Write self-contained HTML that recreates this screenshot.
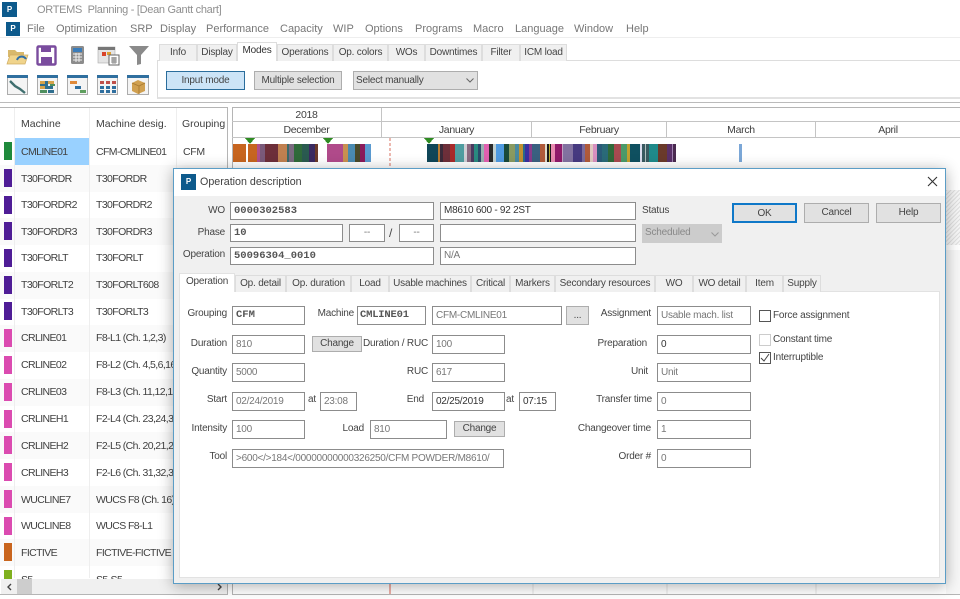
<!DOCTYPE html>
<html><head><meta charset="utf-8"><title>ORTEMS Planning</title>
<style>
html,body{margin:0;padding:0;background:#fff}
#p{position:relative;width:960px;height:599px;overflow:hidden;background:#fff;font:10px "Liberation Sans",sans-serif;letter-spacing:-.2px;color:#444}
#p div,#p span.a{position:absolute;box-sizing:border-box}
.t{white-space:nowrap;line-height:14px;height:14px}
.r{white-space:nowrap;line-height:14px;height:14px;text-align:right}
.m{white-space:nowrap;color:#777;font-size:11px;letter-spacing:0;line-height:14px;height:14px;top:22px}
.b{background:#e1e1e1;border:1px solid #adadad;text-align:center;white-space:nowrap;color:#444}
.f{background:#fff;border:1px solid #8c8c8c;white-space:nowrap;overflow:hidden;padding-left:3px;color:#777;line-height:16px;letter-spacing:-.25px}
.d{color:#333}
.bd{font-family:"Liberation Mono",monospace;font-weight:bold;color:#555;font-size:10.5px;letter-spacing:0}
.tb{background:#f0f0f0;border:1px solid #ddd;border-bottom:0;top:44px;height:17px;text-align:center;line-height:15px;color:#444;white-space:nowrap}
.dt{background:#f0f0f0;border:1px solid #ddd;border-bottom:0;top:275px;height:17px;text-align:center;line-height:15px;color:#444;white-space:nowrap}
.row{left:15px;width:212px;height:27px}
.c{left:4px;width:8px;height:18px}
.n{left:21px;white-space:nowrap;line-height:14px;height:14px;color:#404040;font-size:10.5px;letter-spacing:-.6px}
.g{left:96px;white-space:nowrap;line-height:14px;height:14px;color:#404040;font-size:10.5px;letter-spacing:-.6px}
.h{font-size:10.5px;letter-spacing:-.3px;color:#404040}
.ck{width:12px;height:12px;border:1px solid #555;background:#fff}
svg{position:absolute;overflow:visible}
</style></head><body><div id="p">

<!-- title + menu -->
<div style="left:2px;top:2px;width:15px;height:15px;background:#0d5a8c;color:#fff;font:bold 8px/15px 'Liberation Sans';text-align:center">P</div>
<div class="t" style="left:37px;top:3px;color:#8f8f8f;font-size:11px;letter-spacing:-.3px">ORTEMS&nbsp; Planning - [Dean Gantt chart]</div>
<div style="left:6px;top:22px;width:14px;height:14px;background:#0d5a8c;color:#fff;font:bold 8px/14px 'Liberation Sans';text-align:center">P</div>
<div class="m" style="left:27px">File</div>
<div class="m" style="left:56px">Optimization</div>
<div class="m" style="left:130px">SRP</div>
<div class="m" style="left:160px">Display</div>
<div class="m" style="left:206px">Performance</div>
<div class="m" style="left:280px">Capacity</div>
<div class="m" style="left:333px">WIP</div>
<div class="m" style="left:365px">Options</div>
<div class="m" style="left:415px">Programs</div>
<div class="m" style="left:473px">Macro</div>
<div class="m" style="left:515px">Language</div>
<div class="m" style="left:574px">Window</div>
<div class="m" style="left:626px">Help</div>
<div style="left:0;top:37px;width:960px;height:1px;background:#eee"></div>

<!-- toolbar icons -->
<svg style="left:0;top:40px" width="160" height="60" viewBox="0 0 160 60">
 <path d="M8 10h7l2 2h7v5H8z" fill="#d9b96c"/><path d="M7 24l3-9h18l-3 9z" fill="#f0d48c" stroke="#d0ac60" stroke-width=".7"/><path d="M17 20a5 5 0 0 1 9-1" fill="none" stroke="#2f6fa8" stroke-width="2"/>
 <rect x="37.500" y="6.500" width="18" height="18" rx="1" fill="#fff" stroke="#7a4c9e" stroke-width="2.400"/><rect x="41" y="6" width="10" height="6" fill="#7a4c9e"/><rect x="41" y="17" width="11" height="7" fill="#7a4c9e"/>
 <rect x="71" y="6" width="13" height="18" rx="1.500" fill="#8c8c8c"/><rect x="73" y="8" width="9" height="4" fill="#3a7cba"/><path d="M73 14h9M73 17h9M73 20h9M76 13v9M79 13v9" stroke="#eee" stroke-width="1"/>
 <rect x="98" y="7" width="17" height="16" fill="#e4e4e4" stroke="#aaa" stroke-width=".6"/><rect x="98" y="7" width="17" height="3" fill="#777"/><rect x="102" y="12" width="4" height="4" fill="#d8442a"/><rect x="107" y="12" width="4" height="3" fill="#e0a030"/><rect x="109" y="15" width="10" height="10" fill="#fff" stroke="#666"/><path d="M111 18h6M111 20h6M111 22h6M113 17v7M115 17v7" stroke="#666" stroke-width=".7"/>
 <path d="M129 6h20l-8 9v9l-4 1V15z" fill="#8a8a8a"/>
 <g stroke="#999" stroke-width=".8"><rect x="7.500" y="35.500" width="20" height="19" fill="#f4f4f4"/><rect x="37.500" y="35.500" width="20" height="19" fill="#f4f4f4"/><rect x="67.500" y="35.500" width="20" height="19" fill="#f4f4f4"/><rect x="97.500" y="35.500" width="20" height="19" fill="#f4f4f4"/><rect x="127.500" y="35.500" width="21" height="19" fill="#f4f4f4"/></g>
 <path d="M7 35h21v3H7zM37 35h21v3H37zM67 35h21v3H67zM97 35h21v3H97zM127 35h22v3h-22z" fill="#2f6f9f"/>
 <path d="M10 41l5 5 5 3 5 4" fill="none" stroke="#3f6f6f" stroke-width="2.400"/>
 <path d="M40 41h5v3h-5zM48 41h6v3h-6zM40 46h5v3h-5z" fill="#d6a24a"/><path d="M45 41h3v3h-3zM40 44h8v2h-8zM45 46h8v3h-8zM48 50h6v3h-6z" fill="#2f6f8f"/><path d="M40 50h7v3h-7zM50 44h5v2h-5z" fill="#4f8f5f"/>
 <rect x="70" y="41" width="7" height="3" fill="#e08a3a"/><rect x="75" y="46" width="6" height="3" fill="#2f6f9f"/><rect x="80" y="50" width="6" height="3" fill="#5f9f5f"/>
 <path d="M100 41h4v3h-4zM106 41h4v3h-4zM112 41h4v3h-4z" fill="#c0504a"/><path d="M100 46h4v3h-4zM106 46h4v3h-4zM112 46h4v3h-4zM100 50h4v3h-4zM106 50h4v3h-4zM112 50h4v3h-4z" fill="#2f6f9f"/>
 <path d="M132 43l6-3 7 3v8l-7 3-6-3z" fill="#d0a050"/><path d="M132 43l7 3 6-3M139 46v8" fill="none" stroke="#a87a30" stroke-width=".9"/>
</svg>

<!-- ribbon tabs -->
<div style="left:157px;top:60px;width:803px;height:39px;border-left:1px solid #ddd;border-top:1px solid #ddd;border-bottom:2px solid #e2e2e2;background:#fff"></div>
<div class="tb" style="left:159px;width:38px">Info</div>
<div class="tb" style="left:197px;width:40px">Display</div>
<div style="left:237px;top:42px;width:40px;height:19px;background:#fff;border:1px solid #ddd;border-bottom:0;text-align:center;line-height:16px;color:#333">Modes</div>
<div class="tb" style="left:277px;width:56px">Operations</div>
<div class="tb" style="left:333px;width:55px">Op. colors</div>
<div class="tb" style="left:388px;width:37px">WOs</div>
<div class="tb" style="left:425px;width:57px">Downtimes</div>
<div class="tb" style="left:482px;width:38px">Filter</div>
<div class="tb" style="left:520px;width:47px">ICM load</div>
<div class="b" style="left:166px;top:71px;width:79px;height:19px;background:#cce4f7;border-color:#2a6d9c;line-height:17px">Input mode</div>
<div class="b" style="left:254px;top:71px;width:88px;height:19px;line-height:17px">Multiple selection</div>
<div class="b" style="left:353px;top:71px;width:125px;height:19px;line-height:17px;text-align:left;padding-left:2px">Select manually</div>
<svg style="left:466px;top:78px" width="8" height="5"><path d="M.5.5L4 4 7.5.5" fill="none" stroke="#666"/></svg>
<div style="left:0;top:102px;width:960px;height:1px;background:#bbb"></div>

<!-- table -->
<div style="left:0;top:107px;width:228px;height:488px;border:1px solid #b5b5b5;border-left:0;background:#fff"></div>
<div style="left:232px;top:107px;width:728px;height:488px;border:1px solid #b5b5b5;border-right:0;background:#fff"></div>
<div class="row" style="top:138px;width:75px;background:#99d1ff"></div>
<div class="row" style="top:165px;left:0;width:227px;background:#fafafa"></div>
<div class="row" style="top:218px;left:0;width:227px;background:#fafafa"></div>
<div class="row" style="top:272px;left:0;width:227px;background:#fafafa"></div>
<div class="row" style="top:325px;left:0;width:227px;background:#fafafa"></div>
<div class="row" style="top:379px;left:0;width:227px;background:#fafafa"></div>
<div class="row" style="top:432px;left:0;width:227px;background:#fafafa"></div>
<div class="row" style="top:486px;left:0;width:227px;background:#fafafa"></div>
<div class="row" style="top:539px;left:0;width:227px;background:#fafafa"></div>
<div style="left:14px;top:108px;width:1px;height:470px;background:#eee"></div>
<div style="left:89px;top:108px;width:1px;height:470px;background:#eee"></div>
<div style="left:176px;top:108px;width:1px;height:470px;background:#eee"></div>
<div class="n" style="top:117px;letter-spacing:0">Machine</div>
<div class="g" style="top:117px;letter-spacing:0">Machine desig.</div>
<div class="t h" style="left:182px;top:117px;letter-spacing:0">Grouping</div>
<div class="c" style="top:142px;background:#1f8a3c"></div><div class="n" style="top:145px">CMLINE01</div><div class="g" style="top:145px">CFM-CMLINE01</div><div class="t h" style="left:183px;top:145px">CFM</div>
<div class="c" style="top:169px;background:#4f1d96"></div><div class="n" style="top:172px">T30FORDR</div><div class="g" style="top:172px">T30FORDR</div>
<div class="c" style="top:196px;background:#4f1d96"></div><div class="n" style="top:198px">T30FORDR2</div><div class="g" style="top:198px">T30FORDR2</div>
<div class="c" style="top:222px;background:#4f1d96"></div><div class="n" style="top:225px">T30FORDR3</div><div class="g" style="top:225px">T30FORDR3</div>
<div class="c" style="top:249px;background:#4f1d96"></div><div class="n" style="top:251px">T30FORLT</div><div class="g" style="top:251px">T30FORLT</div>
<div class="c" style="top:276px;background:#4f1d96"></div><div class="n" style="top:278px">T30FORLT2</div><div class="g" style="top:278px">T30FORLT608</div>
<div class="c" style="top:302px;background:#4f1d96"></div><div class="n" style="top:305px">T30FORLT3</div><div class="g" style="top:305px">T30FORLT3</div>
<div class="c" style="top:329px;background:#db4bb0"></div><div class="n" style="top:331px">CRLINE01</div><div class="g" style="top:331px">F8-L1 (Ch. 1,2,3)</div>
<div class="c" style="top:356px;background:#db4bb0"></div><div class="n" style="top:358px">CRLINE02</div><div class="g" style="top:358px">F8-L2 (Ch. 4,5,6,16)</div>
<div class="c" style="top:383px;background:#db4bb0"></div><div class="n" style="top:385px">CRLINE03</div><div class="g" style="top:385px">F8-L3 (Ch. 11,12,13)</div>
<div class="c" style="top:410px;background:#db4bb0"></div><div class="n" style="top:412px">CRLINEH1</div><div class="g" style="top:412px">F2-L4 (Ch. 23,24,30)</div>
<div class="c" style="top:436px;background:#db4bb0"></div><div class="n" style="top:439px">CRLINEH2</div><div class="g" style="top:439px">F2-L5 (Ch. 20,21,22)</div>
<div class="c" style="top:463px;background:#db4bb0"></div><div class="n" style="top:466px">CRLINEH3</div><div class="g" style="top:466px">F2-L6 (Ch. 31,32,33)</div>
<div class="c" style="top:490px;background:#db4bb0"></div><div class="n" style="top:493px">WUCLINE7</div><div class="g" style="top:493px">WUCS F8 (Ch. 16)</div>
<div class="c" style="top:517px;background:#db4bb0"></div><div class="n" style="top:519px">WUCLINE8</div><div class="g" style="top:519px">WUCS F8-L1</div>
<div class="c" style="top:543px;background:#c9651e"></div><div class="n" style="top:546px">FICTIVE</div><div class="g" style="top:546px">FICTIVE-FICTIVE</div>
<div class="c" style="top:570px;height:9px;background:#7fb01e"></div><div class="n" style="top:573px;height:6px;overflow:hidden">S5</div><div class="g" style="top:573px;height:6px;overflow:hidden">S5-S5</div>
<div style="left:1px;top:579px;width:226px;height:15px;background:#f0f0f0"></div>
<div style="left:17px;top:579px;width:15px;height:15px;background:#cdcdcd"></div>
<svg style="left:6px;top:583px" width="8" height="8"><path d="M5 1L2 4l3 3" fill="none" stroke="#444" stroke-width="1.400"/></svg>
<svg style="left:215px;top:583px" width="8" height="8"><path d="M3 1l3 3-3 3" fill="none" stroke="#444" stroke-width="1.400"/></svg>

<!-- gantt header -->
<div style="left:232px;top:121px;width:728px;height:1px;background:#c4c4c4"></div>
<div style="left:232px;top:137px;width:728px;height:1px;background:#c4c4c4"></div>
<div style="left:381px;top:108px;width:1px;height:30px;background:#c4c4c4"></div>
<div style="left:531px;top:122px;width:1px;height:15px;background:#c4c4c4"></div>
<div style="left:666px;top:122px;width:1px;height:15px;background:#c4c4c4"></div>
<div style="left:815px;top:122px;width:1px;height:15px;background:#c4c4c4"></div>
<div class="t h" style="left:232px;width:149px;top:108px;text-align:center">2018</div>
<div class="t h" style="left:232px;width:149px;top:123px;text-align:center">December</div>
<div class="t h" style="left:382px;width:149px;top:123px;text-align:center">January</div>
<div class="t h" style="left:532px;width:134px;top:123px;text-align:center">February</div>
<div class="t h" style="left:667px;width:148px;top:123px;text-align:center">March</div>
<div class="t h" style="left:816px;width:144px;top:123px;text-align:center">April</div>

<!-- gantt bars -->
<svg style="left:0;top:0" width="960" height="599" viewBox="0 0 960 599" shape-rendering="crispEdges">
<g>
<rect x="233" y="144" width="13" height="18" fill="#c7651f"/><rect x="248" y="144" width="9" height="18" fill="#c7651f"/><rect x="257" y="144" width="3" height="18" fill="#b0508a"/><rect x="260" y="144" width="5" height="18" fill="#7a5a7a"/><rect x="265" y="144" width="13" height="18" fill="#6d2f3a"/><rect x="278" y="144" width="9" height="18" fill="#c08050"/><rect x="287" y="144" width="2" height="18" fill="#3a6a6a"/><rect x="289" y="144" width="5" height="18" fill="#7a6a80"/><rect x="294" y="144" width="8" height="18" fill="#2f6a3a"/><rect x="302" y="144" width="7" height="18" fill="#2a5a50"/><rect x="309" y="144" width="6" height="18" fill="#3a2a60"/><rect x="315" y="144" width="3" height="18" fill="#6a3a2a"/>
<rect x="327" y="144" width="16" height="18" fill="#b04a8a"/><rect x="343" y="144" width="5" height="18" fill="#c89050"/><rect x="348" y="144" width="7" height="18" fill="#4a8ab0"/><rect x="355" y="144" width="5" height="18" fill="#4a4a2a"/><rect x="360" y="144" width="5" height="18" fill="#8a1a5a"/><rect x="365" y="144" width="6" height="18" fill="#5a9ad0"/>
<rect x="427" y="144" width="11" height="18" fill="#0f4658"/><rect x="438" y="144" width="2" height="18" fill="#b87a30"/><rect x="440" y="144" width="3" height="18" fill="#3a2a3a"/><rect x="443" y="144" width="7" height="18" fill="#6d2f3a"/><rect x="450" y="144" width="5" height="18" fill="#a82a2a"/><rect x="455" y="144" width="9" height="18" fill="#4f9da0"/><rect x="464" y="144" width="3" height="18" fill="#cfcfd4"/><rect x="467" y="144" width="4" height="18" fill="#8a6a80"/><rect x="471" y="144" width="3" height="18" fill="#4a3a60"/><rect x="474" y="144" width="4" height="18" fill="#2a8a80"/><rect x="478" y="144" width="3" height="18" fill="#2a4a6a"/><rect x="481" y="144" width="3" height="18" fill="#9ab0b0"/><rect x="484" y="144" width="5" height="18" fill="#e060b0"/><rect x="489" y="144" width="4" height="18" fill="#2a2a2a"/><rect x="493" y="144" width="3" height="18" fill="#c0d0d0"/><rect x="496" y="144" width="8" height="18" fill="#4f9ae0"/><rect x="504" y="144" width="5" height="18" fill="#1a4a3a"/><rect x="509" y="144" width="6" height="18" fill="#8a9a60"/><rect x="515" y="144" width="4" height="18" fill="#4a8aa0"/><rect x="519" y="144" width="4" height="18" fill="#c09030"/><rect x="523" y="144" width="2" height="18" fill="#2a6a8a"/><rect x="525" y="144" width="4" height="18" fill="#3a30a0"/><rect x="529" y="144" width="3" height="18" fill="#8a3a8a"/><rect x="532" y="144" width="8" height="18" fill="#3a6080"/><rect x="540" y="144" width="5" height="18" fill="#b05a3a"/><rect x="545" y="144" width="2" height="18" fill="#e0d8c8"/><rect x="547" y="144" width="2" height="18" fill="#1a1a1a"/><rect x="549" y="144" width="1" height="18" fill="#c0b030"/><rect x="550" y="144" width="1" height="18" fill="#1a1a1a"/><rect x="551" y="144" width="4" height="18" fill="#e88ab0"/><rect x="555" y="144" width="7" height="18" fill="#8f1a6a"/><rect x="562" y="144" width="1" height="18" fill="#c0a0c0"/><rect x="563" y="144" width="10" height="18" fill="#8272a0"/><rect x="573" y="144" width="9" height="18" fill="#463a80"/><rect x="582" y="144" width="3" height="18" fill="#7a6a9a"/><rect x="585" y="144" width="5" height="18" fill="#b05a3a"/><rect x="590" y="144" width="3" height="18" fill="#e0c8c0"/><rect x="593" y="144" width="4" height="18" fill="#d890c0"/><rect x="597" y="144" width="5" height="18" fill="#2a5a78"/><rect x="602" y="144" width="6" height="18" fill="#2a6a78"/><rect x="608" y="144" width="6" height="18" fill="#2f6a3a"/><rect x="614" y="144" width="7" height="18" fill="#a84a50"/><rect x="621" y="144" width="6" height="18" fill="#4a9a6a"/><rect x="627" y="144" width="3" height="18" fill="#c0a030"/><rect x="630" y="144" width="10" height="18" fill="#0f5060"/><rect x="640" y="144" width="2" height="18" fill="#dde"/><rect x="642" y="144" width="3" height="18" fill="#3a5a60"/><rect x="645" y="144" width="1" height="18" fill="#b0c0c0"/><rect x="646" y="144" width="3" height="18" fill="#3a5a60"/><rect x="649" y="144" width="9" height="18" fill="#1f8a8a"/><rect x="658" y="144" width="9" height="18" fill="#6a3a2a"/><rect x="667" y="144" width="5" height="18" fill="#5a3068"/><rect x="672" y="144" width="1" height="18" fill="#a080b0"/><rect x="673" y="144" width="3" height="18" fill="#4a2a50"/>
<rect x="739" y="144" width="3" height="18" fill="#7ba7d7"/>
</g>
<path d="M245 138h10l-5 6zM323 138h10l-5 6zM424 138h10l-5 6z" fill="#2e8b22"/>
<path d="M390 138v30" stroke="#d9705f" stroke-dasharray="3 2"/>
<path d="M390 584v10" stroke="#d9604f"/>
<path d="M533 584v10M667 584v10M816 584v10" stroke="#e4e4e4"/>
</svg>
<div style="left:946px;top:190px;width:14px;height:55px;background:repeating-linear-gradient(135deg,#e0e0e0 0 1px,#f6f6f6 1px 3px)"></div>
<div style="left:946px;top:250px;width:14px;height:344px;background:#f7f7f7"></div>

<!-- dialog -->
<div style="left:173px;top:168px;width:773px;height:416px;background:#f0f0f0;border:1px solid #5b9dc6;box-shadow:0 2px 14px rgba(0,0,0,.32)"></div>
<div style="left:174px;top:169px;width:771px;height:27px;background:#fff"></div>
<div style="left:181px;top:174px;width:15px;height:16px;background:#0d5a8c;color:#fff;font:bold 8px/16px 'Liberation Sans';text-align:center">P</div>
<div class="t" style="left:200px;top:175px;font-size:10.7px;letter-spacing:0;color:#404040">Operation description</div>
<svg style="left:927px;top:176px" width="11" height="11"><path d="M1 1l9 9M10 1l-9 9" stroke="#333" stroke-width="1.100"/></svg>

<div class="r" style="left:180px;width:45px;top:204px">WO</div>
<div class="f bd" style="left:230px;top:202px;width:204px;height:18px">0000302583</div>
<div class="f d" style="left:440px;top:202px;width:196px;height:18px">M8610 600 - 92 2ST</div>
<div class="t" style="left:642px;top:204px">Status</div>
<div class="r" style="left:180px;width:45px;top:226px">Phase</div>
<div class="f bd" style="left:230px;top:224px;width:113px;height:18px">10</div>
<div class="f" style="left:349px;top:224px;width:36px;height:18px;text-align:center;padding:0">--</div>
<div class="t" style="left:389px;top:226px;font-size:12px">/</div>
<div class="f" style="left:399px;top:224px;width:35px;height:18px;text-align:center;padding:0">--</div>
<div class="f" style="left:440px;top:224px;width:196px;height:18px"></div>
<div style="left:642px;top:224px;width:80px;height:19px;background:#ccc;color:#888;line-height:18px;padding-left:3px">Scheduled</div>
<svg style="left:711px;top:232px" width="8" height="5"><path d="M.5.5L4 4 7.5.5" fill="none" stroke="#999"/></svg>
<div class="r" style="left:175px;width:50px;top:248px">Operation</div>
<div class="f bd" style="left:230px;top:247px;width:204px;height:18px">50096304_0010</div>
<div class="f" style="left:440px;top:247px;width:196px;height:18px">N/A</div>
<div class="b" style="left:732px;top:203px;width:65px;height:20px;border:2px solid #0f78c8;line-height:17px">OK</div>
<div class="b" style="left:804px;top:203px;width:65px;height:20px;line-height:18px">Cancel</div>
<div class="b" style="left:876px;top:203px;width:65px;height:20px;line-height:18px">Help</div>

<!-- dialog tabs -->
<div style="left:179px;top:291px;width:761px;height:287px;background:#fff;border:1px solid #e2e2e2"></div>
<div style="left:179px;top:273px;width:56px;height:19px;background:#fff;border:1px solid #e2e2e2;border-bottom:0;text-align:center;line-height:16px">Operation</div>
<div class="dt" style="left:235px;width:51px">Op. detail</div>
<div class="dt" style="left:286px;width:65px">Op. duration</div>
<div class="dt" style="left:351px;width:38px">Load</div>
<div class="dt" style="left:389px;width:82px">Usable machines</div>
<div class="dt" style="left:471px;width:39px">Critical</div>
<div class="dt" style="left:510px;width:45px">Markers</div>
<div class="dt" style="left:555px;width:100px">Secondary resources</div>
<div class="dt" style="left:655px;width:38px">WO</div>
<div class="dt" style="left:693px;width:53px">WO detail</div>
<div class="dt" style="left:746px;width:37px">Item</div>
<div class="dt" style="left:783px;width:38px">Supply</div>

<!-- left fields -->
<div class="r" style="left:170px;width:57px;top:307px">Grouping</div>
<div class="f bd" style="left:232px;top:306px;width:73px;height:19px;line-height:17px">CFM</div>
<div class="r" style="left:300px;width:54px;top:307px">Machine</div>
<div class="f bd" style="left:357px;top:306px;width:69px;height:19px;line-height:17px;padding-left:2px;letter-spacing:-.2px">CMLINE01</div>
<div class="f" style="left:432px;top:306px;width:130px;height:19px;line-height:17px">CFM-CMLINE01</div>
<div class="b" style="left:566px;top:306px;width:23px;height:19px;line-height:17px">...</div>
<div class="r" style="left:170px;width:57px;top:337px">Duration</div>
<div class="f" style="left:232px;top:335px;width:73px;height:19px;line-height:17px">810</div>
<div class="b" style="left:312px;top:336px;width:50px;height:16px;line-height:14px">Change</div>
<div class="r" style="left:350px;width:78px;top:337px">Duration / RUC</div>
<div class="f" style="left:432px;top:335px;width:73px;height:19px;line-height:17px">100</div>
<div class="r" style="left:170px;width:57px;top:365px">Quantity</div>
<div class="f" style="left:232px;top:363px;width:73px;height:19px;line-height:17px">5000</div>
<div class="r" style="left:390px;width:38px;top:365px">RUC</div>
<div class="f" style="left:432px;top:363px;width:73px;height:19px;line-height:17px">617</div>
<div class="r" style="left:170px;width:57px;top:393px">Start</div>
<div class="f" style="left:232px;top:392px;width:73px;height:19px;line-height:17px">02/24/2019</div>
<div class="t" style="left:308px;top:393px">at</div>
<div class="f" style="left:320px;top:392px;width:37px;height:19px;line-height:17px">23:08</div>
<div class="r" style="left:390px;width:34px;top:393px">End</div>
<div class="f d" style="left:432px;top:392px;width:73px;height:19px;line-height:17px">02/25/2019</div>
<div class="t" style="left:506px;top:393px">at</div>
<div class="f d" style="left:519px;top:392px;width:37px;height:19px;line-height:17px">07:15</div>
<div class="r" style="left:170px;width:57px;top:422px">Intensity</div>
<div class="f" style="left:232px;top:420px;width:73px;height:19px;line-height:17px">100</div>
<div class="r" style="left:320px;width:44px;top:422px">Load</div>
<div class="f" style="left:370px;top:420px;width:77px;height:19px;line-height:17px">810</div>
<div class="b" style="left:454px;top:421px;width:51px;height:16px;line-height:14px">Change</div>
<div class="r" style="left:170px;width:57px;top:450px">Tool</div>
<div class="f" style="left:232px;top:449px;width:272px;height:19px;line-height:17px">&gt;600&lt;/&gt;184&lt;/00000000000326250/CFM POWDER/M8610/</div>

<!-- right fields -->
<div class="r" style="left:580px;width:71px;top:307px">Assignment</div>
<div class="f" style="left:657px;top:306px;width:94px;height:19px;line-height:17px">Usable mach. list</div>
<div class="r" style="left:580px;width:67px;top:337px">Preparation</div>
<div class="f d" style="left:657px;top:335px;width:94px;height:19px;line-height:17px">0</div>
<div class="r" style="left:580px;width:68px;top:365px">Unit</div>
<div class="f" style="left:657px;top:363px;width:94px;height:19px;line-height:17px">Unit</div>
<div class="r" style="left:570px;width:82px;top:393px">Transfer time</div>
<div class="f" style="left:657px;top:392px;width:94px;height:19px;line-height:17px">0</div>
<div class="r" style="left:560px;width:91px;top:422px">Changeover time</div>
<div class="f" style="left:657px;top:420px;width:94px;height:19px;line-height:17px">1</div>
<div class="r" style="left:580px;width:71px;top:450px">Order #</div>
<div class="f" style="left:657px;top:449px;width:94px;height:19px;line-height:17px">0</div>

<div class="ck" style="left:759px;top:310px"></div>
<div class="t" style="left:773px;top:309px">Force assignment</div>
<div class="ck" style="left:759px;top:334px;border-color:#ccc"></div>
<div class="t" style="left:773px;top:333px">Constant time</div>
<div class="ck" style="left:759px;top:352px"></div>
<svg style="left:760px;top:353px" width="10" height="10"><path d="M1 5l3 3 5-7" fill="none" stroke="#444" stroke-width="1"/></svg>
<div class="t" style="left:773px;top:351px">Interruptible</div>

</div></body></html>
